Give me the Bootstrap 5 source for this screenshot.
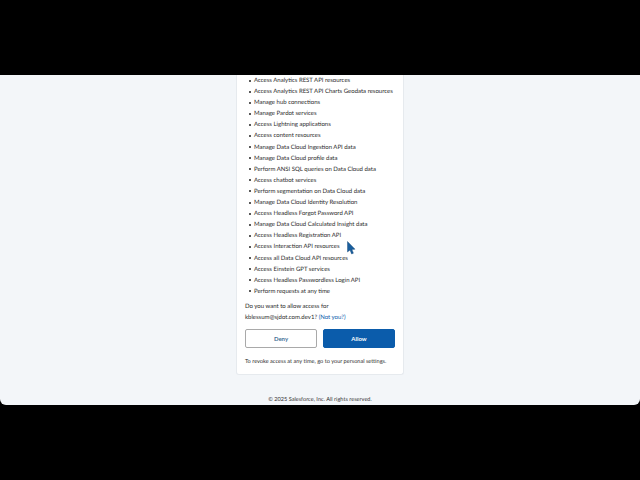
<!DOCTYPE html>
<html lang="en">
<head>
<meta charset="utf-8">
<title>Allow access</title>
<link href="https://cdn.jsdelivr.net/npm/bootstrap@5.3.0/dist/css/bootstrap.min.css" rel="stylesheet">
<style>
html,body{height:480px;margin:0;background:#000;overflow:hidden}
body{font-family:"Lato","Noto Sans",sans-serif;color:#2b2b2b;text-rendering:geometricPrecision}
.shot-frame{height:330px;margin-top:75px;background:#f3f6f9;border-radius:0 0 6px 6px;position:relative;overflow:hidden}
.auth-card{width:168px;height:300px;background:#fff;border:1px solid #e6eaee;border-top:0;border-radius:0 0 3px 3px;padding:0 8px;font-size:6px}
.scope-list{margin:0;padding:0 0 0 9px;list-style:none}
.scope-list li{height:11.1px;line-height:11.1px;white-space:nowrap;position:relative}
.scope-list li::before{content:"";position:absolute;left:-5px;top:4.5px;width:2px;height:2px;border-radius:50%;background:#222}
.ask-text{margin:4px 0 0;line-height:11px}
.ask-text a{color:#0b5cab;text-decoration:none}
.act-row{gap:6px;margin-top:6px}
.act-btn{flex:1 1 0;height:19px;padding:0;font-size:6px;line-height:17px;border-radius:2px;font-weight:700}
.act-deny{background:#fff;border:1px solid #a9a9a9;color:#3f6f96}
.act-deny:hover{background:#fff;color:#3f6f96}
.act-allow{background:#0b5cab;border:1px solid #0b5cab;color:#fff}
.revoke-text{margin:10px 0 0;font-size:5.6px;line-height:8px;white-space:nowrap}
.copy-text{font-size:5.6px;line-height:8px;color:#333;margin-top:21px}
.pointer-mark{position:absolute;left:347px;top:166px;width:9px;height:15px}
</style>
</head>
<body>
<div class="shot-frame d-flex flex-column align-items-center">
  <div class="auth-card">
    <ul class="scope-list">
      <li>Access Analytics REST API resources</li>
      <li>Access Analytics REST API Charts Geodata resources</li>
      <li>Manage hub connections</li>
      <li>Manage Pardot services</li>
      <li>Access Lightning applications</li>
      <li>Access content resources</li>
      <li>Manage Data Cloud Ingestion API data</li>
      <li>Manage Data Cloud profile data</li>
      <li>Perform ANSI SQL queries on Data Cloud data</li>
      <li>Access chatbot services</li>
      <li>Perform segmentation on Data Cloud data</li>
      <li>Manage Data Cloud Identity Resolution</li>
      <li>Access Headless Forgot Password API</li>
      <li>Manage Data Cloud Calculated Insight data</li>
      <li>Access Headless Registration API</li>
      <li>Access Interaction API resources</li>
      <li>Access all Data Cloud API resources</li>
      <li>Access Einstein GPT services</li>
      <li>Access Headless Passwordless Login API</li>
      <li>Perform requests at any time</li>
    </ul>
    <p class="ask-text">Do you want to allow access for<br>kblessum@sjdot.com.dev1? <a href="#">(Not you?)</a></p>
    <div class="d-flex act-row">
      <button type="button" class="btn act-btn act-deny">Deny</button>
      <button type="button" class="btn act-btn act-allow">Allow</button>
    </div>
    <p class="revoke-text">To revoke access at any time, go to your personal settings.</p>
  </div>
  <div class="copy-text text-center">© 2025 Salesforce, Inc. All rights reserved.</div>
  <svg class="pointer-mark" viewBox="0 0 9 15" aria-hidden="true"><path d="M0.5 0.5 L0.5 11 L3 9 L4.6 13 L6.4 12.2 L4.9 8.4 L8 8.2 Z" fill="#1a5f9e" stroke="#0d3f70" stroke-width=".4"/></svg>
</div>
<script src="https://cdn.jsdelivr.net/npm/bootstrap@5.3.0/dist/js/bootstrap.bundle.min.js"></script>
</body>
</html>
